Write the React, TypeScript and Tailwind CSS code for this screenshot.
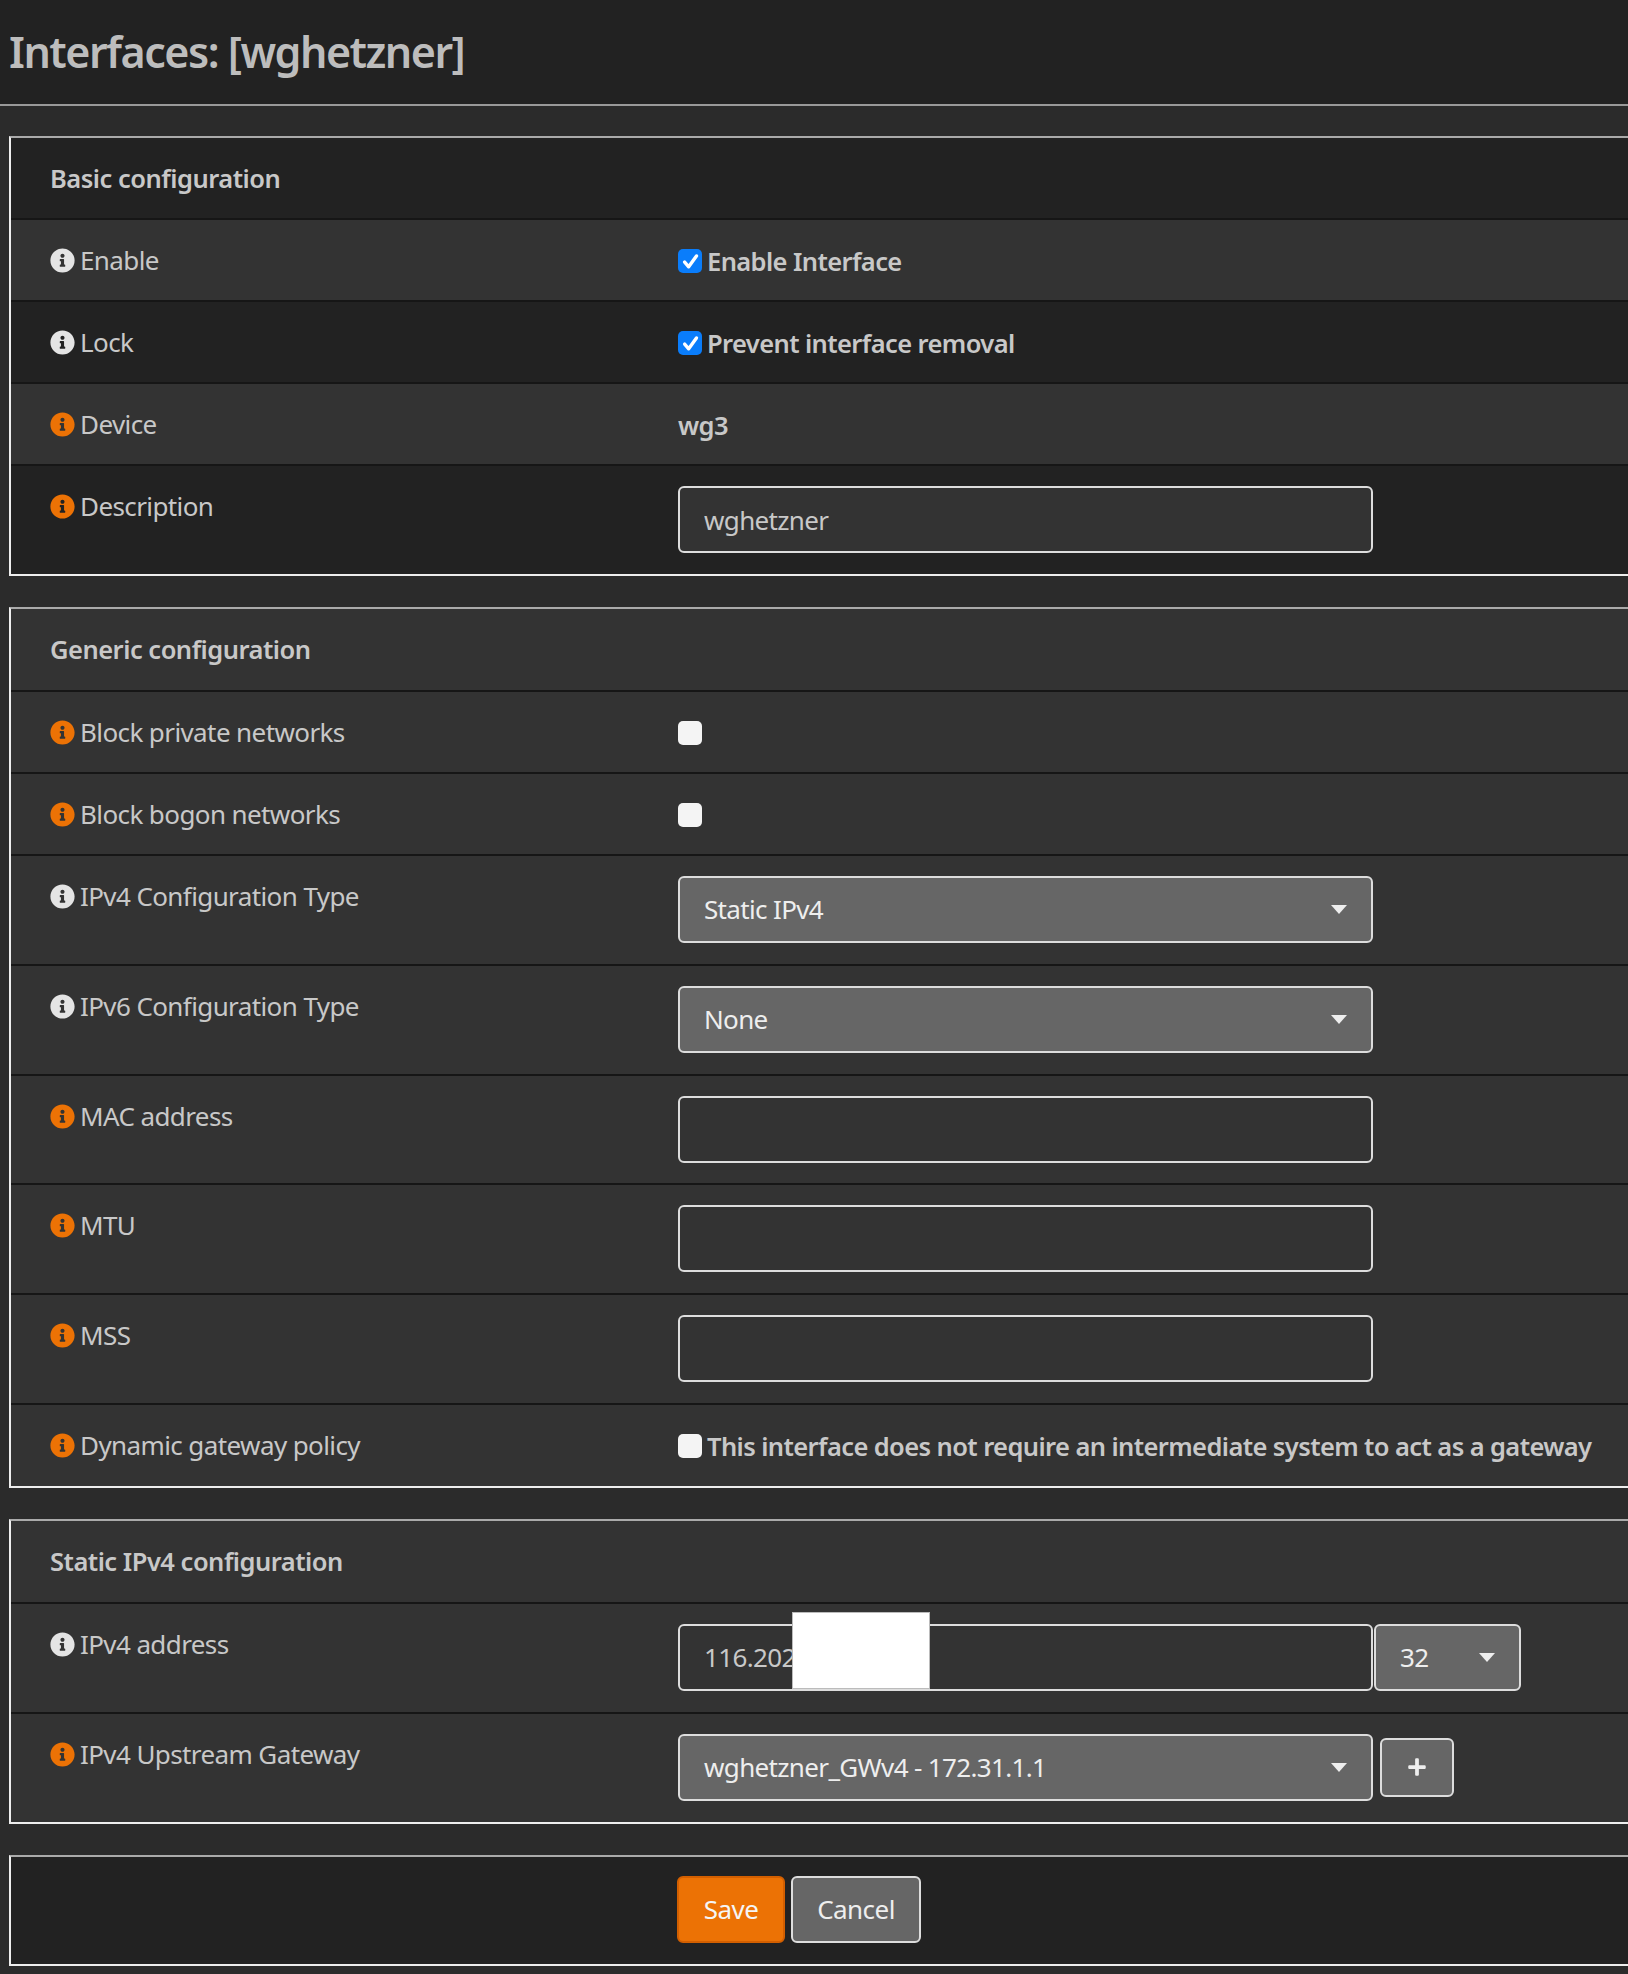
import type { ReactNode } from 'react';
import { FaInfoCircle, FaPlus } from 'react-icons/fa';

const FONT = "font-['Noto_Sans','Open_Sans',sans-serif]";

function Caret() {
  return (
    <svg width="16" height="9" viewBox="0 0 16 9" className="shrink-0">
      <path d="M0 0h16L8 9z" fill="#eeeeee" />
    </svg>
  );
}

function Check({ checked }: { checked?: boolean }) {
  if (!checked) {
    return <span className="block w-6 h-6 shrink-0 rounded-[5px] bg-[#f4f4f4]" />;
  }
  return (
    <span className="flex items-center justify-center w-6 h-6 shrink-0 rounded-[5px] bg-[#0a7dfb]">
      <svg width="17" height="17" viewBox="0 0 16 16">
        <path d="M2.5 8.6 6.3 13 13.6 2.8" fill="none" stroke="#ffffff" strokeWidth="3.2" strokeLinecap="round" strokeLinejoin="round" />
      </svg>
    </span>
  );
}

function Row({
  label,
  help,
  bg = 'bg-[#333333]',
  last,
  tall,
  children,
}: {
  label: string;
  help?: boolean;
  bg?: string;
  last?: boolean;
  tall?: boolean;
  children: ReactNode;
}) {
  const height = tall ? (last ? 'h-[108px]' : 'h-[109.8px]') : last ? 'h-[81px]' : 'h-[82px]';
  return (
    <div className={`flex ${bg} ${last ? '' : 'border-b-2 border-[#161616]'} ${height}`}>
      <div className="w-[667px] shrink-0 pl-[39px] pt-[28px] flex items-start">
        <FaInfoCircle size={25} className={`shrink-0 ${help ? 'text-[#ec7205]' : 'text-[#e4e4e4]'}`} />
        <span className="ml-[5px] text-[26px] leading-[24px] text-[#c8c8c8] tracking-[-0.6px] whitespace-nowrap">{label}</span>
      </div>
      <div className={`flex-1 flex ${tall ? 'pt-[20px] items-start' : 'pt-[2px] items-center'}`}>{children}</div>
    </div>
  );
}

function CheckField({ checked, children }: { checked?: boolean; children?: ReactNode }) {
  return (
    <div className="flex items-center">
      <Check checked={checked} />
      {children && (
        <span className="ml-[5px] text-[25.5px] font-semibold text-[#c8c8c8] tracking-[-0.6px] whitespace-nowrap">{children}</span>
      )}
    </div>
  );
}

function TextField({ value }: { value?: string }) {
  return (
    <input
      readOnly
      value={value ?? ''}
      className="w-[695px] h-[67px] px-[24px] bg-[#333333] border-2 border-[#dddddd] rounded-[6px] text-[26px] text-[#c8c8c8] tracking-[-0.65px] outline-none"
    />
  );
}

function SelectField({ value, width = 'w-[695px]' }: { value: string; width?: string }) {
  return (
    <button className={`${width} h-[67px] pl-[24px] pr-[24px] flex items-center justify-between bg-[#666666] border-2 border-[#dddddd] rounded-[6px] text-[26px] text-[#eeeeee] tracking-[-0.65px]`}>
      <span>{value}</span>
      <Caret />
    </button>
  );
}

function Panel({
  title,
  bg,
  headHeight,
  children,
  className,
}: {
  title: string;
  bg: string;
  headHeight: string;
  children: ReactNode;
  className: string;
}) {
  return (
    <section className={`ml-[9px] border-2 border-r-0 border-[#eeeeee] border-t-[#aaaaaa] ${className}`}>
      <div className={`${headHeight} flex items-center pl-[39px] border-b-2 border-[#161616] ${bg}`}>
        <h2 className="text-[25.5px] font-semibold text-[#c8c8c8] tracking-[-0.5px]">{title}</h2>
      </div>
      {children}
    </section>
  );
}

export default function App() {
  return (
    <div className={`${FONT} min-h-[1974px] bg-[#2b2b2b] overflow-hidden pb-[9px]`}>
      <header className="h-[106px] flex items-center pl-[9px] bg-[#222222] border-b-2 border-[#999999]">
        <h1 className="text-[43px] font-semibold text-[#bdbdbd] tracking-[-1.5px]">Interfaces: [wghetzner]</h1>
      </header>

      <Panel title="Basic configuration" bg="bg-[#222222]" headHeight="h-[82px]" className="mt-[30px]">
        <Row label="Enable">
          <CheckField checked>Enable Interface</CheckField>
        </Row>
        <Row label="Lock" bg="bg-[#222222]">
          <CheckField checked>Prevent interface removal</CheckField>
        </Row>
        <Row label="Device" help>
          <span className="text-[25.5px] font-semibold text-[#c8c8c8] tracking-[-0.6px]">wg3</span>
        </Row>
        <Row label="Description" help bg="bg-[#222222]" last tall>
          <TextField value="wghetzner" />
        </Row>
      </Panel>

      <Panel title="Generic configuration" bg="bg-[#333333]" headHeight="h-[83px]" className="mt-[31px]">
        <Row label="Block private networks" help>
          <CheckField />
        </Row>
        <Row label="Block bogon networks" help>
          <CheckField />
        </Row>
        <Row label="IPv4 Configuration Type" tall>
          <SelectField value="Static IPv4" />
        </Row>
        <Row label="IPv6 Configuration Type" tall>
          <SelectField value="None" />
        </Row>
        <Row label="MAC address" help tall>
          <TextField />
        </Row>
        <Row label="MTU" help tall>
          <TextField />
        </Row>
        <Row label="MSS" help tall>
          <TextField />
        </Row>
        <Row label="Dynamic gateway policy" help last>
          <CheckField>This interface does not require an intermediate system to act as a gateway</CheckField>
        </Row>
      </Panel>

      <Panel title="Static IPv4 configuration" bg="bg-[#333333]" headHeight="h-[83px]" className="mt-[31px]">
        <Row label="IPv4 address" tall>
          <div className="relative flex">
            <TextField value="116.202" />
            <span className="absolute left-[114px] top-[-12px] w-[138px] h-[77px] bg-white border border-[#bbbbbb]" />
            <SelectField value="32" width="w-[147px] ml-[1px]" />
          </div>
        </Row>
        <Row label="IPv4 Upstream Gateway" help last tall>
          <div className="flex items-center">
            <SelectField value="wghetzner_GWv4 - 172.31.1.1" />
            <button className="ml-[7px] w-[74px] h-[59px] flex items-center justify-center bg-[#666666] border-2 border-[#dddddd] rounded-[6px] text-[#eeeeee]">
              <FaPlus size={20} />
            </button>
          </div>
        </Row>
      </Panel>

      <section className="mt-[31px] ml-[9px] h-[111px] flex items-start pl-[666px] pt-[19px] bg-[#222222] border-2 border-r-0 border-[#eeeeee] border-t-[#aaaaaa]">
        <button className="w-[108px] h-[67px] bg-[#ec7205] border-2 border-[#d35f00] rounded-[6px] text-[26px] text-[#f5f5f5] tracking-[-0.55px]">Save</button>
        <button className="ml-[6px] w-[130px] h-[67px] bg-[#666666] border-2 border-[#dddddd] rounded-[6px] text-[26px] text-[#eeeeee] tracking-[-0.55px]">Cancel</button>
      </section>
    </div>
  );
}
